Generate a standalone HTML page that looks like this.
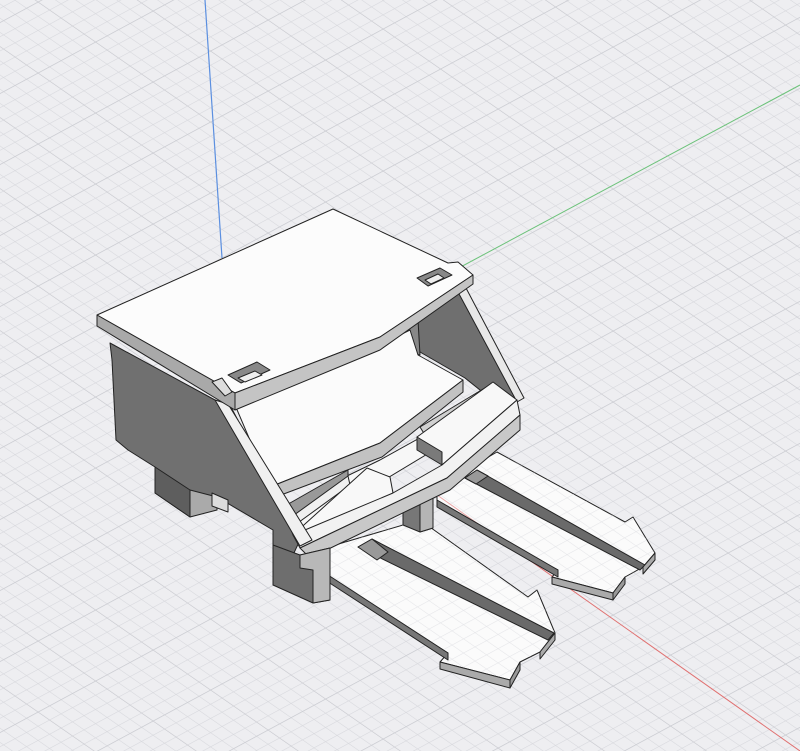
<!DOCTYPE html>
<html><head><meta charset="utf-8"><style>
html,body{margin:0;padding:0;background:#eeeef1;}
svg{display:block}
</style></head><body>
<svg width="800" height="751" viewBox="0 0 800 751" xmlns="http://www.w3.org/2000/svg">
<defs>
<pattern id="g" width="10" height="10" patternUnits="userSpaceOnUse" patternTransform="matrix(1.15 0.8 1.15 -0.62 440 495)">
<path d="M0 0H10M0 0V10" stroke="#d6d7dc" stroke-width="0.9" fill="none"/>
</pattern>
<pattern id="g5" width="50" height="50" patternUnits="userSpaceOnUse" patternTransform="matrix(1.15 0.8 1.15 -0.62 440 495)">
<path d="M0 0H50M0 0V50" stroke="#c9cad0" stroke-width="1" fill="none"/>
</pattern>
<clipPath id="fk">
<polygon points="325,548 420,520 528,597 537,590 555,633 540,652 520,662 510,680 440,662 448,653 325,575"/>
<polygon points="437,487 497,452 625,522 633,517 655,553 643,567 625,577 613,593 552,577 558,570 437,505"/>
</clipPath>
</defs>
<rect width="800" height="751" fill="#eeeef1"/>
<rect width="800" height="751" fill="url(#g)"/>
<rect width="800" height="751" fill="url(#g5)"/>
<line x1="205" y1="0" x2="222" y2="258" stroke="#5b8fe0" stroke-width="1.2"/>
<line x1="455" y1="270" x2="800" y2="85" stroke="#6cc27a" stroke-width="1"/>
<line x1="430" y1="490" x2="800" y2="751" stroke="#e07070" stroke-width="1"/>

<g stroke="#222" stroke-width="1" stroke-linejoin="round">
<!-- back fork -->
<polygon points="437,487 497,452 625,522 633,517 655,553 643,567 625,577 613,593 552,577 558,570 437,505" fill="#fbfbfb"/>
<!-- front fork -->
<polygon points="325,548 420,520 528,597 537,590 555,633 540,652 520,662 510,680 440,662 448,653 325,575" fill="#fbfbfb"/>
</g>
<g clip-path="url(#fk)" opacity="0.6">
<rect width="800" height="751" fill="url(#g)"/>
<line x1="430" y1="490" x2="800" y2="751" stroke="#e07070" stroke-width="1"/>
</g>
<g stroke="#222" stroke-width="1" stroke-linejoin="round">
<!-- back fork details -->
<polygon points="437,500 558,570 558,577 437,507" fill="#777"/>
<polygon points="465,478 477,470 645,565 640,570" fill="#6a6a6a"/>
<polygon points="465,478 477,470 488,476 476,484" fill="#999"/>
<polygon points="552,577 613,593 613,600 552,584" fill="#aaa"/>
<polygon points="613,593 625,577 625,584 613,600" fill="#999"/>
<polygon points="643,567 655,553 655,560 643,574" fill="#aaa"/>
<!-- front fork details -->
<polygon points="325,573 448,653 448,660 325,580" fill="#777"/>
<polygon points="358,547 372,539 554,633 548,640" fill="#6a6a6a"/>
<polygon points="358,547 372,539 388,552 377,560" fill="#999"/>
<polygon points="440,662 510,680 510,688 440,669" fill="#aaa"/>
<polygon points="510,680 520,662 520,670 510,688" fill="#999"/>
<polygon points="540,652 555,633 555,640 540,659" fill="#aaa"/>
<!-- middle leg -->
<polygon points="403,493 420,486 433,490 433,528 420,532 403,525" fill="#777"/>
<polygon points="420,486 433,490 433,528 420,532" fill="#b5b5b5"/>
<!-- left side panel -->
<polygon points="110,343 215,400 230,405 300,540 293,555 273,548 273,530 217,497 190,517 155,493 155,467 128,450 116,440 112,360" fill="#707070"/>
<polygon points="155,467 190,490 190,517 155,493" fill="#5e5e5e"/>
<polygon points="190,490 217,497 217,510 190,517" fill="#aaa"/>
<polygon points="212,493 228,500 228,512 212,506" fill="#ddd"/>
<!-- right side panel -->
<polygon points="410,325 460,290 520,400 495,402 465,378 420,352" fill="#6f6f6f"/>
<polygon points="458,292 466,288 524,398 517,402" fill="#e8e8e8"/>
<polygon points="405,325 418,320 420,355 407,352" fill="#888"/>
<!-- middle shelf -->
<polygon points="235,405 380,345 410,330 418,355 463,380 380,443 270,487" fill="#fbfbfb"/>
<polygon points="270,487 380,443 463,380 463,392 382,457 273,498" fill="#c2c2c2"/>
<!-- lower platform -->
<polygon points="283,507 380,460 470,410 517,400 293,535" fill="#f7f7f7"/>
<polygon points="283,507 348,470 348,478 290,518" fill="#999"/>
<polygon points="290,518 348,476 350,485 295,525" fill="#f0f0f0"/>
<polygon points="295,533 367,468 390,477 393,493 305,540" fill="#f8f8f8"/>
<polygon points="420,427 493,383 500,390 425,435" fill="#d0d0d0"/>
<polygon points="417,437 493,382 517,400 442,465" fill="#f8f8f8"/>
<polygon points="417,437 442,452 442,465 417,450" fill="#7a7a7a"/>
<!-- front beam -->
<polygon points="293,535 393,493 442,465 517,400 520,415 447,478 300,548" fill="#f2f2f2"/>
<polygon points="300,548 447,478 520,415 520,430 450,490 310,558" fill="#c8c8c8"/>
<!-- left front slanted edge strip -->
<polygon points="215,400 228,404 312,540 300,546" fill="#f0f0f0"/>
<!-- left leg block -->
<polygon points="273,545 300,555 330,548 330,600 313,603 273,585" fill="#6e6e6e"/>
<polygon points="300,555 330,548 330,600 313,603 313,570 300,568" fill="#b8b8b8"/>
<!-- top plate -->
<polygon points="97,315 333,209 448,263 458,262 473,275 380,337 235,393 215,382" fill="#fcfcfc"/>
<polygon points="235,393 380,337 473,275 473,284 380,350 235,410" fill="#c4c4c4"/>
<polygon points="97,315 235,393 235,410 97,326" fill="#a9a9a9"/>
<polygon points="212,382 222,378 232,392 225,396" fill="#ddd"/>
<polygon points="228,375 257,362 270,370 241,383" fill="#888"/>
<polygon points="238,378 255,371 262,375 245,382" fill="#eee"/>
<polygon points="417,278 440,268 452,275 428,286" fill="#888"/>
<polygon points="425,280 438,274 444,278 431,284" fill="#eee"/>
</g>
</svg>
</body></html>
